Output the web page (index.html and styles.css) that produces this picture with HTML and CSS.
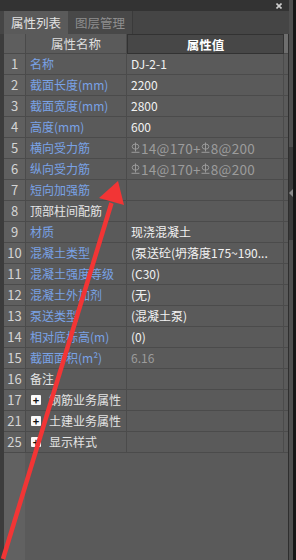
FILE: index.html
```html
<!DOCTYPE html>
<html>
<head>
<meta charset="utf-8">
<link rel="stylesheet" href="styles.css">
</head>
<body>
<div class="app">
  <div class="main">
    <div class="topbar">
      <svg class="close" width="6" height="6" viewBox="0 0 6 6"><path d="M0.5 0.5L5.5 5.5M5.5 0.5L0.5 5.5" stroke="#cfcfcf" stroke-width="1.6"/></svg>
    </div>
    <div class="tabbar">
      <div class="tab active">属性列表</div>
      <div class="tab">图层管理</div>
    </div>
    <div class="panel">
      <div class="grid">
        <div class="hc hidx"></div><div class="hc hname">属性名称</div><div class="hc hval">属性值</div><div class="hc hend"></div>

        <div class="c idx">1</div><div class="c name blue">名称</div><div class="c val">DJ-2-1</div><div class="c end"></div>
        <div class="c idx">2</div><div class="c name blue">截面长度(mm)</div><div class="c val">2200</div><div class="c end"></div>
        <div class="c idx">3</div><div class="c name blue">截面宽度(mm)</div><div class="c val">2800</div><div class="c end"></div>
        <div class="c idx">4</div><div class="c name blue">高度(mm)</div><div class="c val">600</div><div class="c end"></div>
        <div class="c idx">5</div><div class="c name blue">横向受力筋</div><div class="c val gray rebar"><svg class="rb" viewBox="0 0 9 11"><ellipse cx="4.5" cy="4.6" rx="3.3" ry="2.6" fill="none" stroke="#9a9a9a" stroke-width="1"/><path d="M4.5 0.5V9.5M0.5 10.3H8.5" stroke="#9a9a9a" stroke-width="1"/></svg>14@170+<svg class="rb" viewBox="0 0 9 11"><ellipse cx="4.5" cy="4.6" rx="3.3" ry="2.6" fill="none" stroke="#9a9a9a" stroke-width="1"/><path d="M4.5 0.5V9.5M0.5 10.3H8.5" stroke="#9a9a9a" stroke-width="1"/></svg>8@200</div><div class="c end"></div>
        <div class="c idx">6</div><div class="c name blue">纵向受力筋</div><div class="c val gray rebar"><svg class="rb" viewBox="0 0 9 11"><ellipse cx="4.5" cy="4.6" rx="3.3" ry="2.6" fill="none" stroke="#9a9a9a" stroke-width="1"/><path d="M4.5 0.5V9.5M0.5 10.3H8.5" stroke="#9a9a9a" stroke-width="1"/></svg>14@170+<svg class="rb" viewBox="0 0 9 11"><ellipse cx="4.5" cy="4.6" rx="3.3" ry="2.6" fill="none" stroke="#9a9a9a" stroke-width="1"/><path d="M4.5 0.5V9.5M0.5 10.3H8.5" stroke="#9a9a9a" stroke-width="1"/></svg>8@200</div><div class="c end"></div>
        <div class="c idx">7</div><div class="c name blue">短向加强筋</div><div class="c val"></div><div class="c end"></div>
        <div class="c idx">8</div><div class="c name">顶部柱间配筋</div><div class="c val"></div><div class="c end"></div>
        <div class="c idx">9</div><div class="c name blue">材质</div><div class="c val">现浇混凝土</div><div class="c end"></div>
        <div class="c idx">10</div><div class="c name blue">混凝土类型</div><div class="c val">(泵送砼(坍落度175~190...</div><div class="c end"></div>
        <div class="c idx">11</div><div class="c name blue">混凝土强度等级</div><div class="c val">(C30)</div><div class="c end"></div>
        <div class="c idx">12</div><div class="c name blue">混凝土外加剂</div><div class="c val">(无)</div><div class="c end"></div>
        <div class="c idx">13</div><div class="c name blue">泵送类型</div><div class="c val">(混凝土泵)</div><div class="c end"></div>
        <div class="c idx">14</div><div class="c name blue">相对底标高(m)</div><div class="c val">(0)</div><div class="c end"></div>
        <div class="c idx">15</div><div class="c name blue">截面面积(m²)</div><div class="c val gray">6.16</div><div class="c end"></div>
        <div class="c idx">16</div><div class="c name">备注</div><div class="c val"></div><div class="c end"></div>
        <div class="c idx">17</div><div class="c name"><span class="plus">+</span>钢筋业务属性</div><div class="c val"></div><div class="c end"></div>
        <div class="c idx">21</div><div class="c name"><span class="plus">+</span>土建业务属性</div><div class="c val"></div><div class="c end"></div>
        <div class="c idx">25</div><div class="c name"><span class="plus">+</span>显示样式</div><div class="c val"></div><div class="c end"></div>
      </div>
      <div class="filler"></div>
    </div>
  </div>
  <div class="strip">
    <div class="strip-top"></div>
    <div class="strip-mid"><span class="tri"></span></div>
    <div class="strip-bot"></div>
  </div>
  <div class="edge"></div>
</div>
<svg class="arrow" width="296" height="560" viewBox="0 0 296 560">
  <path d="M3 559L111.5 203" stroke="#f23535" stroke-width="4.5" stroke-linecap="butt"/>
  <polygon points="118,181 124,205 99,198" fill="#f23535"/>
</svg>
</body>
</html>
```

FILE: styles.css
```css
* { box-sizing: border-box; }
html, body { margin: 0; padding: 0; }
body {
  width: 296px;
  height: 560px;
  overflow: hidden;
  position: relative;
  background: #3b3b3b;
  font-family: "Noto Sans CJK SC", "Noto Sans", sans-serif;
  font-size: 12px;
}
.app { display: flex; height: 560px; }
.main {
  width: 289px;
  display: flex;
  flex-direction: column;
  background: #3c3c3c;
}
.topbar {
  height: 11px;
  background: #333333;
  display: flex;
  justify-content: flex-end;
  align-items: center;
  padding-right: 7px;
}
.close { display: block; }
.tabbar {
  height: 23px;
  background: #454545;
  display: flex;
  padding-left: 4px;
}
.tab {
  width: 65px;
  display: flex;
  align-items: center;
  justify-content: center;
  color: #8e8e8e;
  background: #484848;
  border-right: 1px solid #3a3a3a;
  font-size: 12.5px;
}
.tab.active { width: 64px; background: #5a5a5a; color: #e2e2e2; border-right: none; }
.panel {
  flex: 1;
  margin-left: 4px;
  border-right: 1px solid #2e2e2e;
  display: flex;
  flex-direction: column;
  background: #5a5a5a;
}
.grid {
  display: grid;
  grid-template-columns: 22px 101px 157px 4px;
  grid-template-rows: 20px;
  grid-auto-rows: 21px;
}
.hc { border-right: 1px solid #4a4a4a; border-bottom: 1px solid #4a4a4a; display: flex; align-items: center; justify-content: center; }
.hidx { background: #5e5e5e; }
.hname { background: #5a5a5a; color: #dedede; font-size: 12.5px; }
.hval { background: #474747; border: 1px solid #323232; color: #ffffff; font-weight: bold; font-size: 12.5px; }
.hend { background: #6e6e6e; border-right: none; }
.c {
  border-right: 1px solid #4b4b4b;
  border-bottom: 1px solid #4b4b4b;
  display: flex;
  align-items: center;
  white-space: nowrap;
  overflow: hidden;
  line-height: 20px;
}
.idx { background: #5f5f5f; justify-content: center; color: #d4d4d4; font-size: 13px; }
.name { padding-left: 4px; color: #e4e4e4; }
.name.blue { color: #79a2e6; }
.val { padding-left: 4px; color: #f2f2f2; }
.val.gray { color: #9c9c9c; }
.val.rebar { font-size: 13.5px; letter-spacing: 0.3px; }
.end { border-right: none; }
.rb { width: 9px; height: 11px; margin-right: 1px; margin-bottom: 2px; flex: none; }
.plus {
  width: 10px;
  height: 10px;
  background: #fafafa;
  border-radius: 1px;
  color: #111;
  font-size: 11px;
  font-weight: bold;
  line-height: 10px;
  display: inline-flex;
  align-items: center;
  justify-content: center;
  margin-left: 1px;
  margin-right: 8px;
}
.filler {
  flex: 1;
  background: linear-gradient(to right, #616161 21px, #5a5a5a 21px);
}
.strip { width: 4px; display: flex; flex-direction: column; background: #505050; }
.strip-top { height: 147px; background: #4f4f4f; }
.strip-mid { height: 93px; background: #3a3a3a; position: relative; }
.strip-bot { flex: 1; background: #4f4f4f; }
.tri {
  position: absolute;
  left: 0;
  top: 42px;
  width: 0;
  height: 0;
  border-top: 4px solid transparent;
  border-bottom: 4px solid transparent;
  border-right: 4px solid #8a8a8a;
}
.edge { width: 3px; background: #161616; }
.arrow { position: absolute; left: 0; top: 0; pointer-events: none; }
```
